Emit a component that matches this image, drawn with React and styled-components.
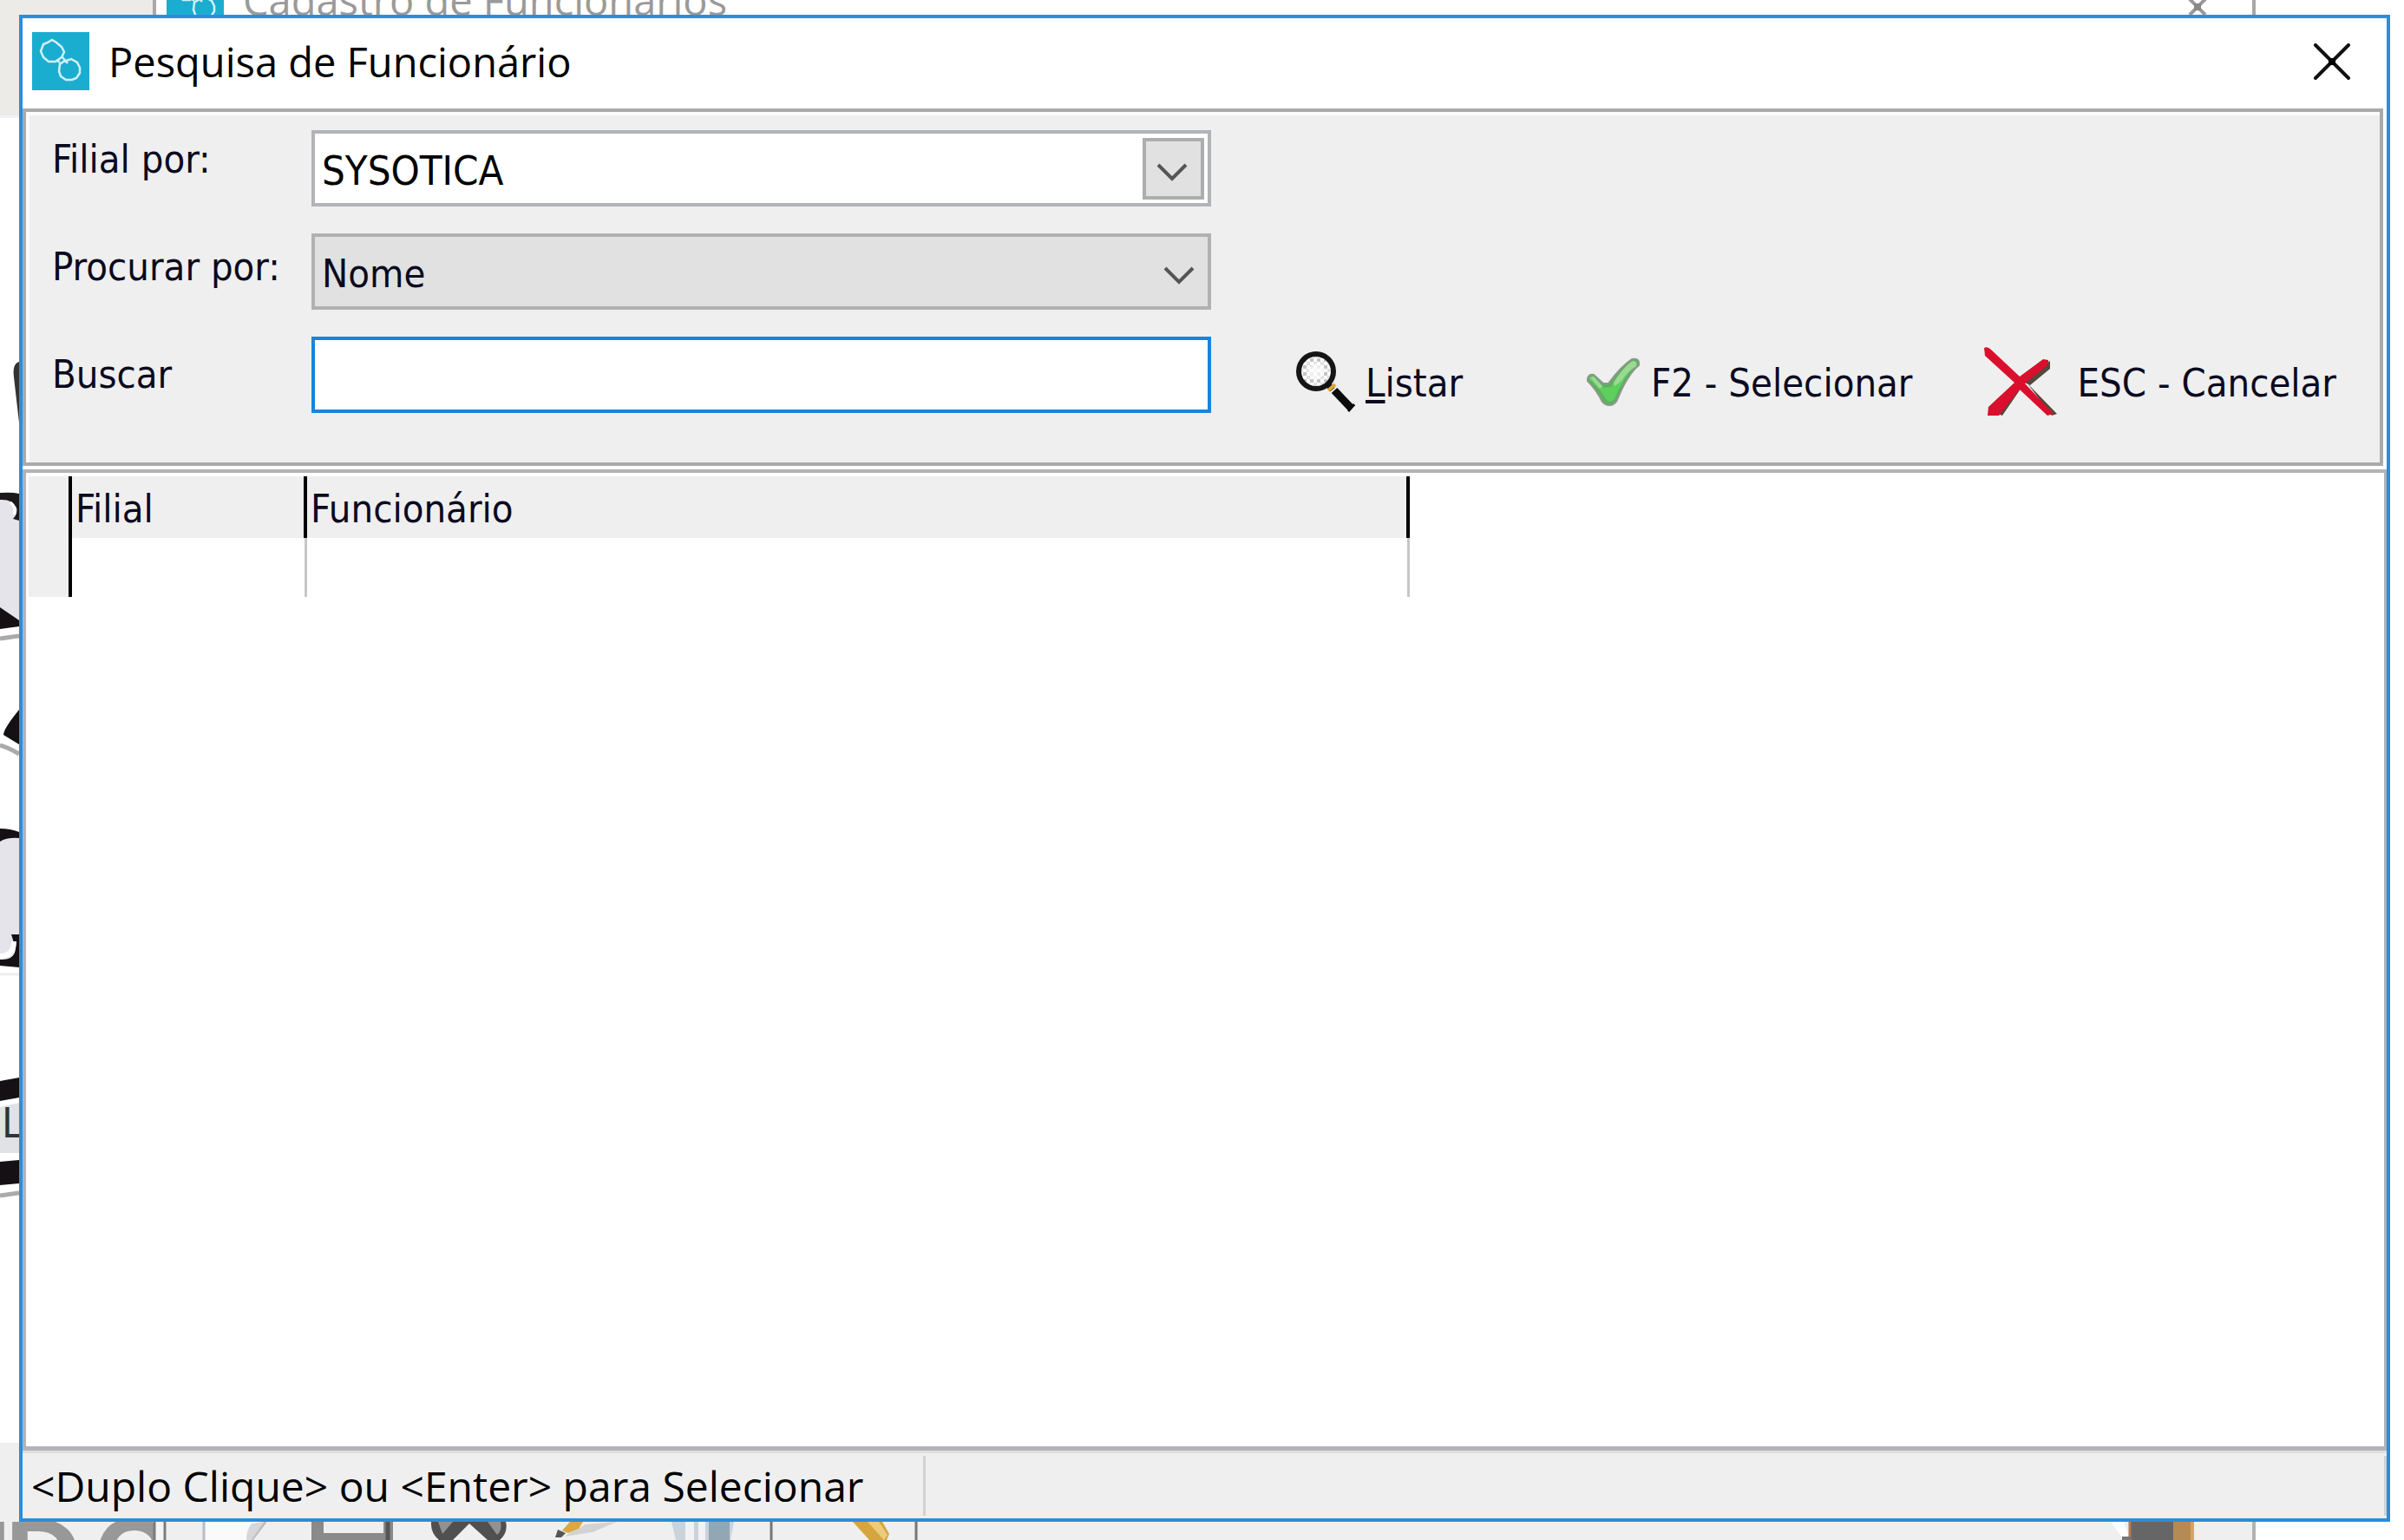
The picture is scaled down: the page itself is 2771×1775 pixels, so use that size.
import React from 'react';
import styled, { createGlobalStyle, css } from 'styled-components';

const uiFont = '"DejaVu Sans Condensed", "DejaVu Sans", sans-serif';
const captionFont = '"Open Sans", "Noto Sans", sans-serif';

const GlobalStyle = createGlobalStyle`
  * { box-sizing: border-box; }
  body { margin: 0; background: #fff; color: #000; }
  button, input, select { font: inherit; color: inherit; }
`;

const Desktop = styled.div`
  display: grid;
  grid-template: minmax(0, 1fr) / minmax(0, 1fr);
  height: 100vh;
  overflow: hidden;
  font: 45px/54px ${uiFont};

  > * { grid-area: 1 / 1; }
`;

/* ---- application behind the dialog ---- */
const Backdrop = styled.div`
  display: flex;
  flex-direction: column;
  min-height: 0;
`;

const BackTop = styled.div`
  flex: none;
  height: 136px;
  background: #edebe7;
  border-bottom: 3px solid #f1f1f7;
`;

const BackMiddle = styled.div`
  flex: 1;
  min-height: 0;
  overflow: hidden;

  svg { display: block; }
`;

const BackBottom = styled.div`
  flex: none;
  display: flex;
  align-items: flex-end;
  justify-content: space-between;
  height: 112px;
  margin-right: 171px;
  background: #efefef;
  border-right: 4px solid #b2b2b2;

  svg { display: block; }
`;

const BackWindow = styled.div`
  height: 17px;
  margin: 0 171px 0 176px;
  overflow: hidden;
  background: #fff;
  border: solid #a8a8a8;
  border-width: 0 4px;
`;

const BackRight = styled.div`
  justify-self: end;
  width: 171px;
  background: #fff;
`;

/* ---- dialog ---- */
const Dialog = styled.section`
  display: flex;
  flex-direction: column;
  min-height: 0;
  margin: 17px 16px 21px 22px;
  background: #fff;
  border: 4px solid #2b8ddc;
`;

const TitleBar = styled.header`
  flex: none;
  display: flex;
  align-items: center;
  gap: 22px;
  height: 104px;
  padding: 0 42px 5px 11px;

  ${(p) => p.$behind && css`
    margin-top: -50px;
    padding: 0 52px 5px 12px;
    color: #9a9a9a;
  `}
`;

const Title = styled.h1`
  flex: 1;
  margin: 0;
  font: 400 47px/64px ${captionFont};
  white-space: nowrap;
`;

const CloseButton = styled.button`
  display: block;
  padding: 0;
  border: 0;
  background: none;

  svg { display: block; }
`;

const SearchPanel = styled.form`
  flex: none;
  display: flex;
  align-items: flex-start;
  justify-content: space-between;
  margin: 0 4px 4px 0;
  padding: 21px 50px 57px 30px;
  background: #efefef;
  border: 4px solid #aaa;
  box-shadow: inset 4px 4px 0 #fcfcfc;
`;

const Criteria = styled.div`
  flex: 0 1 1336px;
  display: flex;
`;

const Labels = styled.div`
  flex: 0 0 299px;
  display: flex;
  flex-direction: column;
  gap: 70px;
  padding-top: 7px;
  color: #0a0a20;
  white-space: nowrap;
`;

const Fields = styled.div`
  flex: 1;
  display: flex;
  flex-direction: column;
  gap: 31px;
  min-width: 0;
`;

const SelectBox = styled.div`
  display: grid;
  align-items: center;

  > * { grid-area: 1 / 1; }
`;

const Select = styled.select`
  appearance: none;
  width: 100%;
  height: 88px;
  padding: 6px 80px 0 8px;
  border: 4px solid #b1b1b1;
  border-radius: 0;
  outline: none;
  background: #e1e1e1;
  color: #0a0a20;

  ${(p) => p.$editable && css`
    border-color: #b1b3b9;
    background: #fff;
    color: #000;
    font-size: 47px;
  `}
`;

const Arrow = styled.span`
  justify-self: end;
  display: grid;
  place-items: center;
  width: 71px;
  height: 71px;
  padding-top: 8px;
  margin-right: 2px;
  pointer-events: none;

  ${(p) => p.$boxed && css`
    margin-right: 8px;
    padding-right: 3px;
    border: 4px solid #adadad;
    background: #e1e1e1;
  `}

  svg { display: block; }
`;

const SearchInput = styled.input`
  width: 100%;
  height: 88px;
  padding: 0 8px;
  border: 4px solid #1a84dc;
  border-radius: 0;
  outline: none;
  background: #fff;
`;

const Actions = styled.div`
  align-self: flex-end;
  display: flex;
  gap: 82px;
  margin-bottom: -4px;
`;

const ActionButton = styled.button`
  display: flex;
  align-items: center;
  gap: 12px;
  min-width: 252px;
  height: 80px;
  padding: 0;
  border: 0;
  background: none;
  color: #0a0a20;
  white-space: nowrap;

  svg { display: block; flex: none; }
  span { padding-top: 4px; }
  u { text-decoration-thickness: 4px; text-underline-offset: 4px; }
`;

const GridArea = styled.div`
  flex: 1;
  min-height: 0;
  padding: 4px 3px;
  border: solid #b2b3b8;
  border-width: 4px 3px 5px 4px;
  background: #fff;
`;

const DataGrid = styled.table`
  table-layout: fixed;
  width: 1592px;
  border-collapse: separate;
  border-spacing: 0;

  th, td {
    height: 68px;
    padding: 0 4px;
    border-right: 3px solid #c6c6c6;
    font-weight: 400;
    text-align: left;
    color: #0a0a20;
  }
  th {
    height: 71px;
    padding-top: 5px;
    background: #efefef;
    border-right: 4px solid #000;
  }
  tr > :first-child {
    width: 50px;
    background: #efefef;
    border-right: 4px solid #000;
  }
  tr > :nth-child(2) { width: 271px; }
`;

const StatusBar = styled.footer`
  flex: none;
  display: flex;
  height: 78px;
  padding: 6px 0 3px;
  background: #efefef;
  box-shadow: inset 0 3px 0 #dedede;
  font: 48px/66px ${captionFont};
`;

const StatusCell = styled.div`
  flex: ${(p) => (p.$grow ? '1' : '0 0 1041px')};
  padding: 2px 10px 0;
  border-right: 3px solid #d2d2d2;
  white-space: nowrap;
`;

/* ---- drawings ---- */
const AppIcon = () => (
  <svg width="66" height="67" viewBox="0 0 66 67" aria-hidden="true">
    <rect width="66" height="67" fill="#1badd0" />
    <g fill="none" stroke="#d2f1f8" strokeWidth="2.5">
      <path d="M18 12l5-3 5 3 6 5 3 6-3 6-7 5h-8l-6-5-3-7 3-8z" />
      <path d="M34 28l7 8M28 32l4 3" />
      <path d="M36 34l9-3 7 4 3 6v6l-4 6-5 2h-7l-6-4-2-6 1-8z" />
    </g>
  </svg>
);

const CloseIcon = () => (
  <svg width="42" height="42" viewBox="0 0 42 42" aria-hidden="true">
    <path d="M2 2l38 38M40 2L2 40" stroke="#111" strokeWidth="4" strokeLinecap="round" />
    <rect x="17" y="17" width="8" height="8" rx="2" />
  </svg>
);

const BackCloseIcon = () => (
  <svg width="22" height="42" viewBox="0 0 22 42" aria-hidden="true">
    <path d="M2 20l18 18M20 20L2 38" stroke="#999" strokeWidth="4" />
    <rect x="7" y="25" width="8" height="8" fill="#888" />
  </svg>
);

const Chevron = () => (
  <svg width="36" height="23" viewBox="0 0 36 23" aria-hidden="true">
    <path d="M2 3l16 16L34 3" fill="none" stroke="#555" strokeWidth="4" />
  </svg>
);

const Magnifier = () => (
  <svg width="68" height="70" viewBox="0 0 68 70" aria-hidden="true">
    <defs>
      <pattern id="lens" width="8" height="8" patternUnits="userSpaceOnUse">
        <rect width="8" height="8" fill="#fff" />
        <rect width="4" height="4" fill="#c4c4c4" />
        <rect x="4" y="4" width="4" height="4" fill="#e0e0e0" />
      </pattern>
    </defs>
    <circle cx="23" cy="23" r="20" fill="url(#lens)" stroke="#151515" strokeWidth="6" />
    <circle cx="23" cy="23" r="9" fill="#fff" opacity=".7" />
    <path d="M35 36l7 8" stroke="#111" strokeWidth="7" />
    <path d="M37 45l8-7" stroke="#e2a83b" strokeWidth="4" />
    <path d="M44 45l19 20" stroke="#0c0c0c" strokeWidth="9" />
    <path d="M60 69l7-8" stroke="#0c0c0c" strokeWidth="3" />
  </svg>
);

const Check = () => (
  <svg width="63" height="58" viewBox="0 0 63 58" aria-hidden="true">
    <path d="M2 26Q3 20 9 21l11 10h6C34 20 44 9 53 3q9-2 8 7C51 18 42 35 36 50q-3 6-9 6-5 0-8-4Q12 38 2 28z" fill="#5fae62" stroke="#8d988d" strokeWidth="2" />
    <path d="M4 25q2-4 6-1l11 12 8-1C36 24 45 12 54 6q5-1 4 4C48 18 39 34 33 49q-5 6-10 0C18 40 13 34 4 27z" fill="#5ccf5c" />
    <path d="M32 30C38 20 46 10 54 5q6 0 4 6c-8 5-12 10-17 17l-8 6zM5 24l4-1 10 11-3 3z" fill="#9bd993" />
  </svg>
);

const Cross = () => (
  <svg width="96" height="80" viewBox="0 0 96 80" aria-hidden="true">
    <path d="M76 16v9L53 44l-6-3L21 79l-5-2 26-37zM50 42l34 35-6 2z" fill="#54483f" />
    <path d="M0 1q4-2 8 2l33 31 27-20 6 1v5L47 42l33 35-7 2-32-30-24 30H4l1-10 30-28L1 10z" fill="#d90f2d" />
  </svg>
);

const SideArtwork = () => (
  <svg width="22" height="1260" viewBox="0 136 22 1260" aria-hidden="true">
    <path d="M22 417q-8 2-6 18l6 52z" fill="#333" />
    <path d="M0 570h22v145L0 702z" fill="#e5e4ea" />
    <path d="M0 568q14-1 22 1v31l-7-2q6-6 4-13-5-10-19-9z" fill="#1b181c" />
    <path d="M12 579q7 6 4 14" fill="none" stroke="#fff" strokeWidth="3" />
    <path d="M0 700l22 15v7L0 725z" fill="#141014" />
    <path d="M0 736l22-3M0 859q10 3 22 10" fill="none" stroke="#aaa" strokeWidth="5" />
    <path d="M22 818v40L4 847q0-7 18-29z" fill="#141014" />
    <path d="M0 966h22v142H0z" fill="#e5e4ea" />
    <path d="M0 955q12 0 22 4v7q-14-1-22 4zM13 1077h9v38l-22-2v-7q17 1 18-13z" fill="#141014" />
    <path d="M0 1102q16 0 16-17" fill="none" stroke="#fff" strokeWidth="6" />
    <path d="M0 1123h22" stroke="#eee" strokeWidth="3" />
    <path d="M0 1246l22-4v23l-22 4zM0 1339l22-2v27l-22 2z" fill="#141014" />
    <path d="M0 1276l22-5v58H0z" fill="#e1e2e6" />
    <path d="M0 1378l22-3" stroke="#aaa" strokeWidth="5" />
    <text x="2" y="1311" fontFamily='"DejaVu Sans Condensed", sans-serif' fontSize="48" fill="#333">L</text>
  </svg>
);

const ToolbarArtwork = () => (
  <svg width="1070" height="21" viewBox="0 0 1070 21" aria-hidden="true">
    <g fill="#989898" fontFamily='"Liberation Sans", sans-serif' fontWeight="700" fontSize="122">
      <text x="-21" y="82">I</text>
      <text x="6" y="82">D</text>
      <text x="108" y="82">C</text>
    </g>
    <path d="M177 0h15v21h-15z" fill="#f4f4f4" />
    <path d="M178 0v21M190 0v21" stroke="#7c7c7c" strokeWidth="3" />
    <path d="M192 0h20v21h-20z" fill="#efefef" />
    <path d="M235 0h72l-22 21h-50z" fill="#fafafa" />
    <path d="M235 0v21M306 0l-16 21" stroke="#bcbcc4" strokeWidth="3" />
    <path d="M284 21q0-12 6-19l14-2-14 21z" fill="#d7d7d9" />
    <path d="M359 0h94v21h-94z" fill="#8a8a8a" />
    <path d="M373 0h69v13h-69z" fill="#efefef" />
    <path d="M447 0v21" stroke="#555" strokeWidth="5" />
    <path d="M497 0h86q3 12-7 21h-14L541 2l-19 19h-16q-10-8-9-21z" fill="#505050" />
    <path d="M505 0h17l-12 14zM562 0h15q2 10-4 15z" fill="#929292" />
    <path d="M541 3l16 18h-31z" fill="#efefef" />
    <path d="M650 17l25-14 36-3-28 12z" fill="#d2d2d2" />
    <path d="M657 0h15l-5 8-12 5-7-3z" fill="#d9a744" />
    <path d="M643 9l9 4-5 5h-7z" fill="#555" />
    <path d="M774 0h72l-4 21h-63z" fill="#ccd2d9" />
    <path d="M790 0h10v21h-10zM805 0h8v21h-8z" fill="#f2f2f5" />
    <path d="M817 0h24v21h-24z" fill="#93a6b4" />
    <path d="M889 0v21M1056 0v21" stroke="#777" strokeWidth="3" />
    <path d="M983 0h34l8 14-3 7h-20z" fill="#d5a540" />
    <path d="M1000 0h13l10 15-4 6z" fill="#eccb7c" />
  </svg>
);

const DoorArtwork = () => (
  <svg width="164" height="21" viewBox="0 0 164 21" aria-hidden="true">
    <path d="M1 0h15l6 18H14z" fill="#fff" />
    <path d="M23 0h50v21H23z" fill="#666" />
    <path d="M23 0v21" stroke="#b57a50" strokeWidth="3" />
    <path d="M73 0h24v21H73z" fill="#b58a55" />
    <path d="M95 0v21" stroke="#d9a360" strokeWidth="4" />
    <path d="M14 19h10" stroke="#777" strokeWidth="4" />
  </svg>
);

export default function App() {
  return (
    <>
      <GlobalStyle />
      <Desktop>
        <Backdrop>
          <BackTop />
          <BackMiddle>
            <SideArtwork />
          </BackMiddle>
          <BackBottom>
            <ToolbarArtwork />
            <DoorArtwork />
          </BackBottom>
        </Backdrop>
        <BackRight />
        <BackWindow>
          <TitleBar as="div" $behind>
            <AppIcon />
            <Title as="div">Cadastro de Funcionários</Title>
            <BackCloseIcon />
          </TitleBar>
        </BackWindow>

        <Dialog aria-labelledby="dialog-title">
          <TitleBar>
            <AppIcon />
            <Title id="dialog-title">Pesquisa de Funcionário</Title>
            <CloseButton type="button" aria-label="Fechar">
              <CloseIcon />
            </CloseButton>
          </TitleBar>

          <SearchPanel onSubmit={(e) => e.preventDefault()}>
            <Criteria>
              <Labels>
                <label htmlFor="filial">Filial por:</label>
                <label htmlFor="campo">Procurar por:</label>
                <label htmlFor="busca">Buscar</label>
              </Labels>
              <Fields>
                <SelectBox>
                  <Select id="filial" $editable defaultValue="SYSOTICA">
                    <option>SYSOTICA</option>
                  </Select>
                  <Arrow $boxed>
                    <Chevron />
                  </Arrow>
                </SelectBox>
                <SelectBox>
                  <Select id="campo" defaultValue="Nome">
                    <option>Nome</option>
                  </Select>
                  <Arrow>
                    <Chevron />
                  </Arrow>
                </SelectBox>
                <SearchInput id="busca" type="text" />
              </Fields>
            </Criteria>
            <Actions>
              <ActionButton type="submit">
                <Magnifier />
                <span><u>L</u>istar</span>
              </ActionButton>
              <ActionButton type="button">
                <Check />
                <span>F2 - Selecionar</span>
              </ActionButton>
              <ActionButton type="button">
                <Cross />
                <span>ESC - Cancelar</span>
              </ActionButton>
            </Actions>
          </SearchPanel>

          <GridArea>
            <DataGrid>
              <thead>
                <tr>
                  <th aria-label="Indicador" />
                  <th scope="col">Filial</th>
                  <th scope="col">Funcionário</th>
                </tr>
              </thead>
              <tbody>
                <tr>
                  <td />
                  <td />
                  <td />
                </tr>
              </tbody>
            </DataGrid>
          </GridArea>

          <StatusBar>
            <StatusCell>&lt;Duplo Clique&gt; ou &lt;Enter&gt; para Selecionar</StatusCell>
            <StatusCell $grow />
          </StatusBar>
        </Dialog>
      </Desktop>
    </>
  );
}
